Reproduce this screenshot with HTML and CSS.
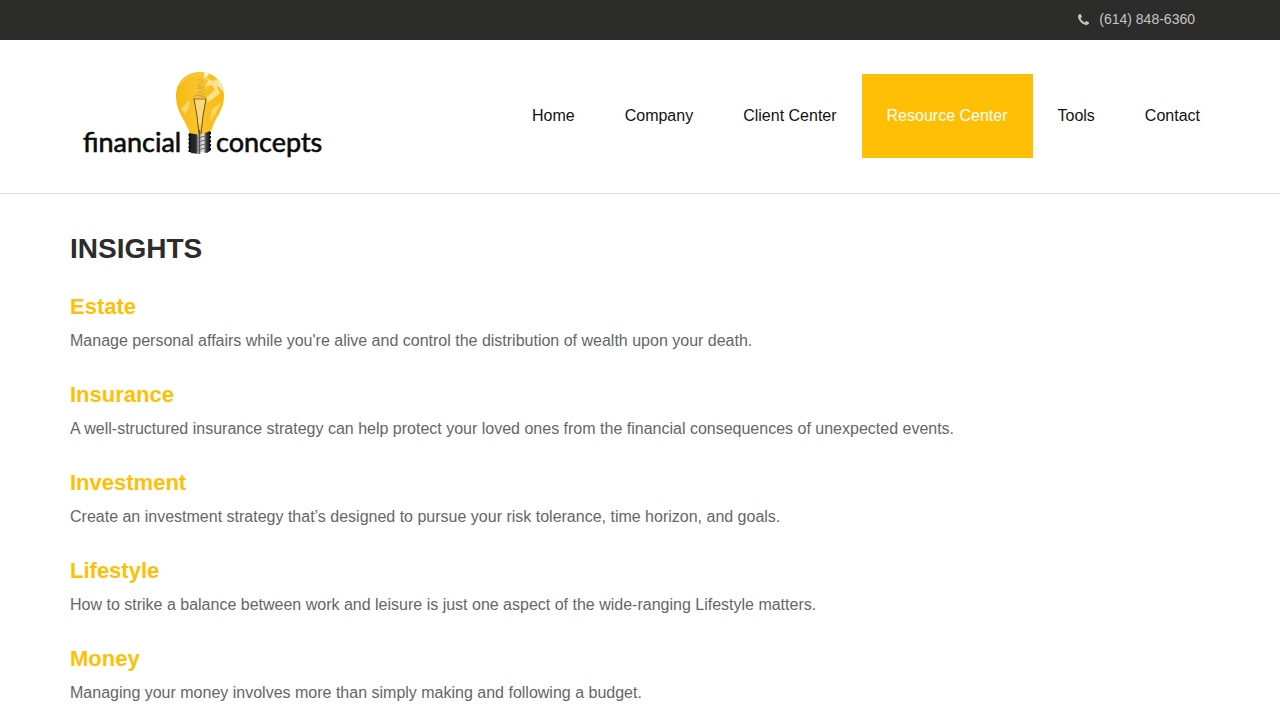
FILE: index.html
```html
<!DOCTYPE html>
<html lang="en">
<head>
  <meta charset="UTF-8">
  <meta name="viewport" content="width=device-width, initial-scale=1.0">
  <title>Insights | Financial Concepts</title>
  <link rel="stylesheet" href="styles.css">
</head>
<body>
  <div class="top-bar">
    <div class="container">
      <a class="phone" href="tel:+16148486360">
        <svg class="phone-icon" viewBox="0 0 1408 1408" aria-hidden="true">
          <path fill="currentColor" d="M1408 1112q0 27-10 70.500t-21 68.500q-21 50-122 106-94 51-186 51-27 0-53-3.500t-57.500-12.500-47-14.500-55.500-20.500-49-18q-98-35-175-83-127-79-264-216t-216-264q-48-77-83-175-3-9-18-49t-20.500-55.500-14.500-47-12.500-57.500-3.500-53q0-92 51-186 56-101 106-122 25-11 68.500-21t70.500-10q14 0 21 3 18 6 53 76 11 19 30 54t35 63.500 31 53.500q3 4 17.500 25t21.500 35.500 7 28.500q0 20-28.500 50t-62 55-62 53-28.500 46q0 9 5 22.500t8.500 20.500 14 24 11.500 19q76 137 174 235t235 174q2 1 19 11.500t24 14 20.500 8.500 22.500 5q18 0 46-28.500t53-62 55-62 50-28.500q14 0 28.500 7t35.500 21.500 25 17.500q25 15 53.500 31t63.500 35 54 30q70 35 76 53 3 7 3 21z"/>
        </svg>
        (614) 848-6360
      </a>
    </div>
  </div>

  <header class="header">
    <div class="container header-inner">
      <a class="logo" href="#" aria-label="Financial Concepts home">
        <svg width="260" height="112" viewBox="0 0 260 112">
          <defs>
            <linearGradient id="glass" x1="0" y1="0" x2="1" y2="0">
              <stop offset="0" stop-color="#f6b90f"/>
              <stop offset="0.45" stop-color="#fac42c"/>
              <stop offset="1" stop-color="#f5bc12"/>
            </linearGradient>
            <linearGradient id="screw" x1="0" y1="0" x2="1" y2="0">
              <stop offset="0" stop-color="#1c1c1c"/>
              <stop offset="0.34" stop-color="#2b2b2b"/>
              <stop offset="0.44" stop-color="#b4b4b4"/>
              <stop offset="0.7" stop-color="#e2e2e2"/>
              <stop offset="0.8" stop-color="#444444"/>
              <stop offset="1" stop-color="#151515"/>
            </linearGradient>
          </defs>

          <!-- glass -->
          <path fill="url(#glass)" d="M130 12C116 12 106 22 106 36C106 45 109 51 112 57C116 64 118 68 120 74L131 76L141 72C143 64 146 59 149 54C152 48 154 43 154 36C154 22 144 12 130 12Z"/>
          <path fill="#fde08a" d="M134 12L139 15L136 18L143 21L147 19L152 27L147 27L150 33L143 39L137 42L137 37L145 30L142 25L135 27L138 20L133 18Z"/>
          <path fill="#fffbe9" d="M134 12L139 14L136 17ZM147 19L150 23L153 31L151 30L149 24Z"/>
          <path fill="#fbd567" d="M111 49L120 39L119 47L115 54ZM142 49L152 42L145 54L140 62Z"/>
          <path fill="none" stroke="#f9d15c" stroke-width="1" d="M110 25C113 19 118 16 124 15"/>

          <!-- filament -->
          <path fill="#fbd67a" d="M123 39H136L131 66H129Z"/>
          <path fill="none" stroke="#c9a548" stroke-width="1" d="M128 20C132 18 134 23 129 24C126 26 132 28 134 26M127 29C132 26 136 33 129 32C125 35 132 37 135 33M123 37C128 33 132 38 136 37"/>
          <path fill="none" stroke="#8d7339" stroke-width="1" d="M123 39H136"/>
          <path fill="none" stroke="#6e5420" stroke-width="1" d="M124 39L127 56L129 74M136 39L133 56L131 74"/>

          <!-- screw base -->
          <path fill="url(#screw)" d="M119 73L130 75L140 71V91L137 93L131 92L129 94L121 93L119 90Z"/>
          <path fill="none" stroke="#6b6b6b" stroke-width="1" d="M127 78L136 76M127 82L136 80M127 86L136 84M127 90L136 88"/>
          <path fill="none" stroke="#0c0c0c" stroke-width="2" stroke-dasharray="2.500 1.500" d="M119.500 74V92M140 72V92"/>
          <path fill="none" stroke="#555555" stroke-width="1.400" d="M129.500 70V94"/>

          <text class="logo-text" x="13" y="92">financial</text>
          <text class="logo-text" x="146" y="92">concepts</text>
        </svg>
      </a>

      <nav class="nav" aria-label="Main">
        <a href="#">Home</a>
        <a href="#">Company</a>
        <a href="#">Client Center</a>
        <a class="active" href="#" aria-current="page">Resource Center</a>
        <a href="#">Tools</a>
        <a href="#">Contact</a>
      </nav>
    </div>
  </header>

  <main class="container content">
    <h1>INSIGHTS</h1>

    <section class="topic">
      <h2><a href="#">Estate</a></h2>
      <p>Manage personal affairs while you're alive and control the distribution of wealth upon your death.</p>
    </section>

    <section class="topic">
      <h2><a href="#">Insurance</a></h2>
      <p>A well-structured insurance strategy can help protect your loved ones from the financial consequences of unexpected events.</p>
    </section>

    <section class="topic">
      <h2><a href="#">Investment</a></h2>
      <p>Create an investment strategy that’s designed to pursue your risk tolerance, time horizon, and goals.</p>
    </section>

    <section class="topic">
      <h2><a href="#">Lifestyle</a></h2>
      <p>How to strike a balance between work and leisure is just one aspect of the wide-ranging Lifestyle matters.</p>
    </section>

    <section class="topic">
      <h2><a href="#">Money</a></h2>
      <p>Managing your money involves more than simply making and following a budget.</p>
    </section>
  </main>
</body>
</html>
```
FILE: styles.css
```css
:root {
  --accent: #ffbf05;
  --dark: #2c2c2a;
  --text: #666666;
  --border: #dddddd;
}
* {
  box-sizing: border-box;
}
body {
  margin: 0;
  font-family: "Liberation Sans", Arial, sans-serif;
  font-size: 16px;
  line-height: 24px;
  color: var(--text);
  background-color: #fff;
}
a {
  color: inherit;
  text-decoration: none;
}
.container {
  max-width: 1170px;
  margin: 0 auto;
  padding: 0 15px;
}

/* Top bar */
.top-bar {
  background-color: var(--dark);
}
.top-bar .container {
  display: flex;
  justify-content: flex-end;
  padding: 7px 30px 9px;
}
.phone {
  display: flex;
  align-items: center;
  gap: 10px;
  font-size: 14px;
  color: #c4c4c4;
}
.phone-icon {
  width: 11px;
  height: 11px;
}

/* Header */
.header {
  border-bottom: 1px solid var(--border);
}
.header-inner {
  display: flex;
  flex-wrap: wrap;
  align-items: center;
  justify-content: space-between;
  padding: 20px 0 21px 15px;
}
.logo svg {
  display: block;
}
.logo-text {
  font-family: Lato, sans-serif;
  font-size: 27px;
  fill: #0b0b0b;
  stroke: #0b0b0b;
  stroke-width: 0.6px;
}
.nav {
  display: flex;
  flex-wrap: wrap;
}
.nav a {
  padding: 30px 25px;
  color: #111;
}
.nav a:hover,
.nav .active {
  color: #fff;
  background-color: var(--accent);
}

/* Content */
.content {
  padding-top: 38px;
}
h1 {
  margin: 0 0 28px;
  font-size: 28px;
  line-height: 34px;
  color: var(--dark);
}
h2 {
  margin: 0 0 9px;
  font-size: 22px;
  line-height: 26px;
  color: var(--accent);
}
h2 a:hover {
  text-decoration: underline;
}
p {
  margin: 0;
}
.topic + .topic {
  margin-top: 29px;
}
```
